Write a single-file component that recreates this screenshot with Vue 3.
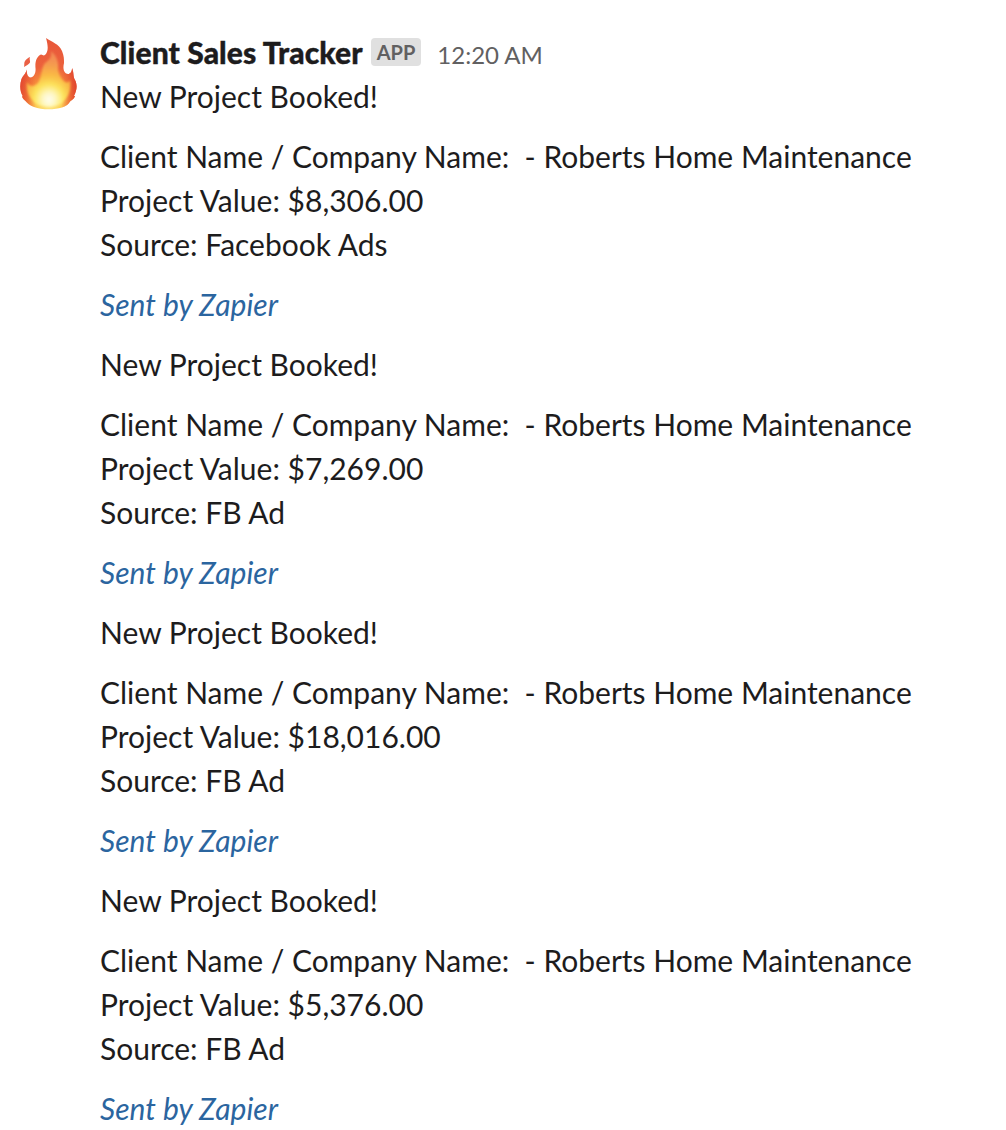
<template>
  <main class="message">
    <div class="avatar">
      <svg width="60" height="76" viewBox="0 0 60 76">
        <defs>
          <radialGradient id="flame" gradientUnits="userSpaceOnUse" cx="29" cy="66" r="60">
            <stop offset="0" stop-color="#fff3a0"/>
            <stop offset="0.2" stop-color="#fcd258"/>
            <stop offset="0.38" stop-color="#f68a3c"/>
            <stop offset="0.6" stop-color="#ec623c"/>
            <stop offset="1" stop-color="#e8583a"/>
          </radialGradient>
          <radialGradient id="core" gradientUnits="userSpaceOnUse" cx="29" cy="63" r="50">
            <stop offset="0" stop-color="#ffffff"/>
            <stop offset="0.12" stop-color="#fffdd8"/>
            <stop offset="0.3" stop-color="#feee60"/>
            <stop offset="0.48" stop-color="#fcc848"/>
            <stop offset="0.75" stop-color="#f7a055"/>
            <stop offset="1" stop-color="#f38a5c"/>
          </radialGradient>
          <linearGradient id="edge" x1="0" x2="1" y1="0" y2="0">
            <stop offset="0" stop-color="#e2452f" stop-opacity="0.9"/>
            <stop offset="0.27" stop-color="#e8572f" stop-opacity="0"/>
            <stop offset="0.73" stop-color="#e8572f" stop-opacity="0"/>
            <stop offset="1" stop-color="#de3f2d" stop-opacity="0.9"/>
          </linearGradient>
          <filter id="soft" x="-20%" y="-20%" width="140%" height="140%">
            <feGaussianBlur stdDeviation="1"/>
          </filter>
        </defs>
        <path :d="flame" fill="url(#flame)"/>
        <path :d="flame" fill="url(#edge)"/>
        <path d="M10 21C8 22 5.500 23.500 4.500 26C4 28 4.500 29 4 31C6 29.500 9 28.500 10 26.500C10.500 24.500 9 23.500 10 21Z" fill="#ea6045"/>
        <path d="M31 15C37 20 39 27 38 34C39 39 42 44 45 46C48 47 49 46 50 44C51 52 50 60 42 67C35 72 23 72 15 67C8 60 6 54 7 46C10 51 14 51 18 47C22 41 21 32 25 27C29 24 32 22 31 15Z" fill="url(#core)" opacity="0.82" filter="url(#soft)"/>
      </svg>
    </div>
    <div class="content">
      <header class="header">
        <span class="sender">Client Sales Tracker</span>
        <span class="badge">APP</span>
        <time class="time">12:20 AM</time>
      </header>
      <section v-for="(booking, i) in bookings" :key="i" class="booking">
        <p>New Project Booked!</p>
        <p>
          Client Name / Company Name:&nbsp; - Roberts Home Maintenance<br>
          Project Value: {{ booking.value }}<br>
          Source: {{ booking.source }}
        </p>
        <p><a class="zapier">Sent by Zapier</a></p>
      </section>
    </div>
  </main>
</template>

<script setup>
const flame = 'M26 2C32 6 39 8 42 15C44 20 44 23 44 27C43 31 43 35 46 37.500C49 39 52 37 52 32C54 36 53 41 55 44C57.500 49 57 54 54 60L55 60C54 63 52 64 50.500 65C48 69 46 70 42 71.500C34 74 22 74 14 71C10 69.500 7 67 5.500 65C4 63.500 2.500 62.500 2 60L3 60.500C0 56 -0.500 49 1.500 43C3 39 6 38 6.500 33.500C7 37 7 41 10.500 41.500C14 41 16 37 15.500 32C15 27 16 21 20.500 18.700C22 18 23 20 24.500 19.300C29 16 28 9 26 2Z'

const bookings = [
  { value: '$8,306.00', source: 'Facebook Ads' },
  { value: '$7,269.00', source: 'FB Ad' },
  { value: '$18,016.00', source: 'FB Ad' },
  { value: '$5,376.00', source: 'FB Ad' }
]
</script>

<style>
body {
  margin: 0;
  background: #fff;
  overflow: hidden;
}
</style>

<style scoped>
.message {
  display: flex;
  gap: 20px;
  height: 1130px;
  padding: 30px 0 0 20px;
  box-sizing: border-box;
  overflow: hidden;
  color: #1d1c1d;
  font-family: Lato, sans-serif;
  font-size: 30px;
  line-height: 44px;
}

.avatar {
  flex: none;
  width: 60px;
  padding-top: 6px;
}

.avatar svg {
  display: block;
}

.content {
  white-space: nowrap;
}

.header {
  display: flex;
  align-items: baseline;
  height: 44px;
}

.sender {
  font-weight: 900;
  letter-spacing: 0.1px;
  -webkit-text-stroke: 0.4px #1d1c1d;
}

.badge {
  align-self: flex-start;
  margin: 8px 0 0 8px;
  padding: 0 6px;
  height: 28px;
  border-radius: 4px;
  background: #e0e0e0;
  color: #616061;
  font-size: 20px;
  font-weight: 700;
  line-height: 29px;
}

.time {
  margin-left: 16px;
  color: #616061;
  font-size: 24px;
}

.booking p {
  margin: 0 0 16px;
}

.zapier {
  color: #2b659f;
  font-style: italic;
}
</style>
